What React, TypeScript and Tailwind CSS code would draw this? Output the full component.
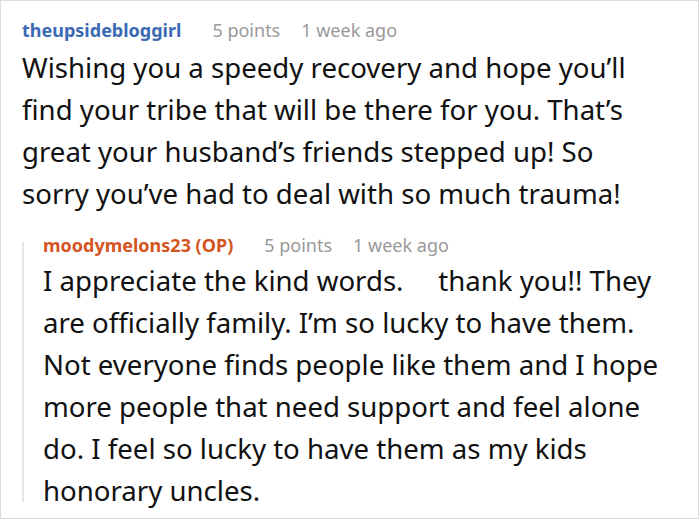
const font = { fontFamily: '"Noto Sans", sans-serif' };

function Meta({ name, color }: { name: string; color: string }) {
    return (
        <div className="flex items-baseline text-[18px] leading-[24px]">
            <span className={`font-bold ${color}`}>{name}</span>
            <span className="ml-[31px] text-[#999999]">5 points</span>
            <span className="ml-[21px] text-[#999999]">1 week ago</span>
        </div>
    );
}

export default function App() {
    return (
        <div className="h-[520px] w-[700px] bg-white" style={font}>
            <div className="h-[519px] w-[699px] border border-[#dddddd] pl-[21px] pt-[17px]">
                <Meta name="theupsidebloggirl" color="text-[#3b69b3]" />
                <p className="mt-[4px] w-[630px] text-[27.6px] leading-[42px] text-[#111111]">
                    Wishing you a speedy recovery and hope you’ll find your tribe
                    that will be there for you. That’s great your husband’s friends
                    stepped up! So sorry you’ve had to deal with so much trauma!
                </p>

                <div className="mt-[19px] flex">
                    <div className="mt-[9px] mb-[9px] w-[2px] bg-[#e6e6e6]" />
                    <div className="pl-[19px]">
                        <Meta name="moodymelons23 (OP)" color="text-[#d4541f]" />
                        <p className="mt-[2px] w-[632px] text-[27.6px] leading-[42px] text-[#111111]">
                            {"I appreciate the kind words. \u2003thank you!! They are officially family. I’m so lucky to have them. Not everyone finds people like them and I hope more people that need support and feel alone do. I feel so lucky to have them as my kids honorary uncles."}
                        </p>
                    </div>
                </div>
            </div>
        </div>
    );
}
